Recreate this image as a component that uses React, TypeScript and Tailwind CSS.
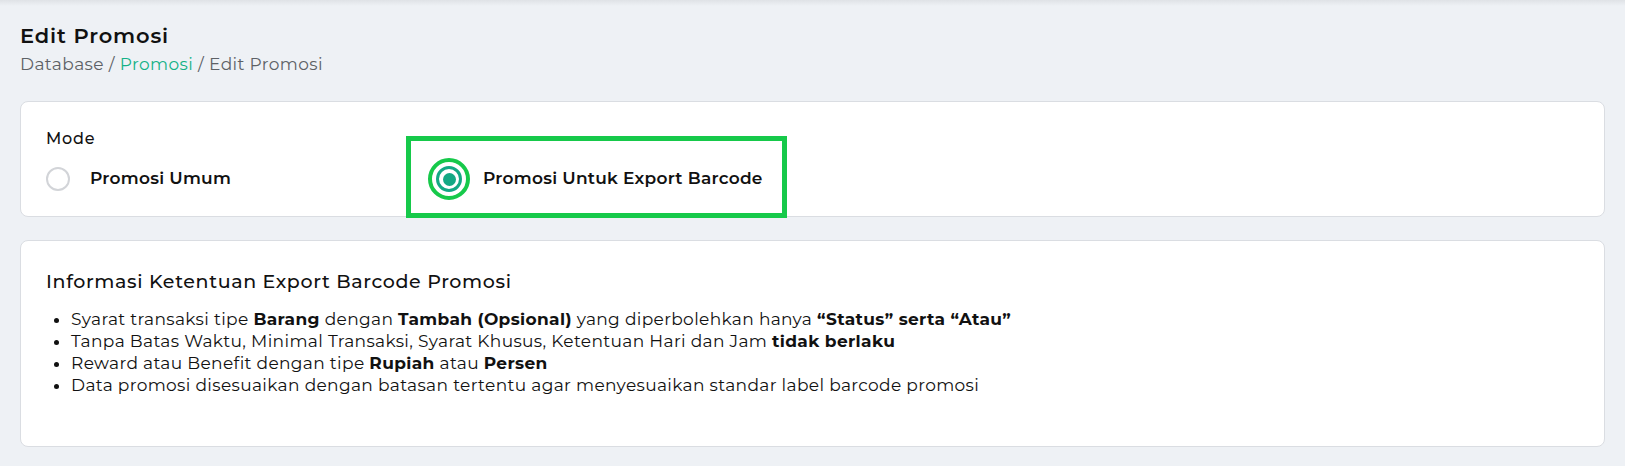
import React, { useState } from 'react';

type Mode = 'umum' | 'barcode';

const rules: React.ReactNode[] = [
  <>
    Syarat transaksi tipe <b className="font-bold">Barang</b> dengan{' '}
    <b className="font-bold">Tambah (Opsional)</b> yang diperbolehkan hanya{' '}
    <b className="font-bold">“Status” serta “Atau”</b>
  </>,
  <>
    Tanpa Batas Waktu, Minimal Transaksi, Syarat Khusus, Ketentuan Hari dan Jam{' '}
    <b className="font-bold">tidak berlaku</b>
  </>,
  <>
    Reward atau Benefit dengan tipe <b className="font-bold">Rupiah</b> atau{' '}
    <b className="font-bold">Persen</b>
  </>,
  <>Data promosi disesuaikan dengan batasan tertentu agar menyesuaikan standar label barcode promosi</>,
];

const EditPromosi: React.FC = () => {
  const [mode, setMode] = useState<Mode>('barcode');

  return (
    <div className="min-h-screen bg-[#eef1f5] font-['Montserrat','Open_Sans',sans-serif] text-[#111]">
      <div className="h-[6px] bg-gradient-to-b from-[#dfe2e6] to-[#eef1f5]" />
      <div className="px-5 pb-5 pt-[16px]">
        <h1 className="text-[21px] leading-[28px] font-semibold tracking-[0.85px]">Edit Promosi</h1>
        <p className="mt-[2px] text-[17px] leading-[24px] tracking-[0.4px] text-[#5d6166]">
          Database / <span className="text-[#14b187]">Promosi</span> / Edit Promosi
        </p>

        <div className="mt-[25px] rounded-lg border border-[#dadde2] bg-white px-[25px] pt-[26px] pb-[15px]">
          <div className="text-[16px] leading-[22px] font-medium tracking-[0.8px]">Mode</div>
          <div className="mt-[7px] flex items-center h-[44px]">
            <button
              type="button"
              onClick={() => setMode('umum')}
              className="flex w-[390px] items-center gap-5"
            >
              {mode === 'umum' ? (
                <span className="flex h-6 w-6 items-center justify-center rounded-full border-[3px] border-[#13a884]">
                  <span className="h-3 w-3 rounded-full bg-[#13a884]" />
                </span>
              ) : (
                <span className="h-6 w-6 rounded-full border-2 border-[#d2d4d8]" />
              )}
              <span className="text-[17px] font-semibold tracking-[0.25px]">Promosi Umum</span>
            </button>

            <div className="relative">
              <button
                type="button"
                onClick={() => setMode('barcode')}
                className="flex items-center gap-[21px]"
              >
                {mode === 'barcode' ? (
                  <span className="relative flex h-[26px] w-[26px] items-center justify-center rounded-full border-[3px] border-[#13a884]">
                    <span className="h-[13px] w-[13px] rounded-full bg-[#13a884]" />
                    <span className="absolute -inset-[11px] rounded-full border-4 border-[#16c94a]" />
                  </span>
                ) : (
                  <span className="h-6 w-6 rounded-full border-2 border-[#d2d4d8]" />
                )}
                <span className="text-[17px] font-semibold tracking-[0.25px]">Promosi Untuk Export Barcode</span>
              </button>
              <div className="pointer-events-none absolute -left-[30px] -right-[24px] -top-[30px] -bottom-[26px] border-[5px] border-[#16c94a]" />
            </div>
          </div>
        </div>

        <div className="mt-[23px] rounded-lg border border-[#dadde2] bg-white px-[25px] pt-[27px] pb-[50px]">
          <h2 className="text-[19px] leading-[28px] font-medium tracking-[0.65px]">
            Informasi Ketentuan Export Barcode Promosi
          </h2>
          <ul className="mt-[12px] list-disc pl-[25px] text-[17px] leading-[22px] tracking-[0.35px]">
            {rules.map((r, i) => (
              <li key={i}>{r}</li>
            ))}
          </ul>
        </div>
      </div>
    </div>
  );
};

export default function App() {
  return <EditPromosi />;
}
